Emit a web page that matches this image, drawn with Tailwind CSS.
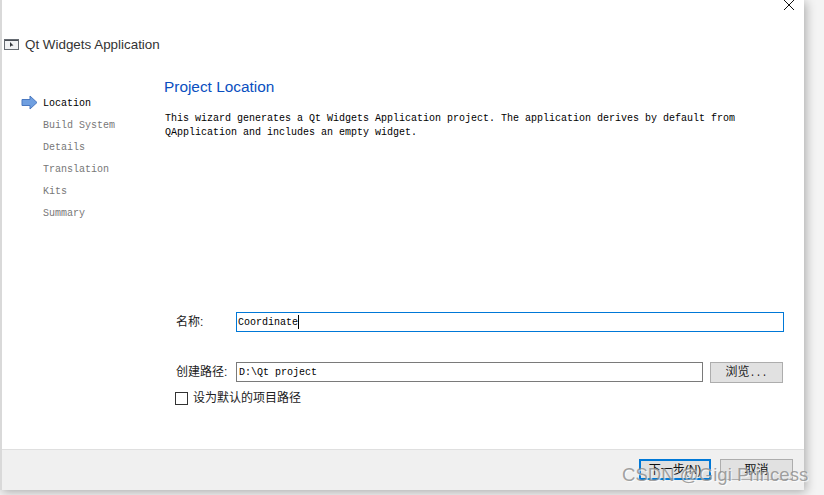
<!DOCTYPE html>
<html lang="zh">

<head>
  <meta charset="UTF-8">
  <title>Qt Widgets Application</title>
  <script src="https://cdn.jsdelivr.net/npm/@tailwindcss/browser@4"></script>
</head>

<body class="bg-white overflow-hidden">

  <div class="relative w-[824px] h-[495px] overflow-hidden bg-[#f4f4f4] font-['Liberation_Sans','Noto_Sans_CJK_SC',sans-serif]">

    <!-- Dialog -->
    <div class="relative w-[804px] h-[490px] flex flex-col bg-white border-l-2 border-[#d9d9d9] shadow-[2px_2px_10px_rgba(0,0,0,0.3)]">

      <svg class="absolute left-[781px] top-[-1px] w-3 h-3" viewBox="0 0 12 12" fill="none" stroke="#111" stroke-width="1">
        <path d="M1 1 11 11M11 1 1 11" />
      </svg>

      <!-- Title -->
      <div class="h-[90px] pt-[36px] pl-[2px] flex items-start gap-[6px]">
        <svg class="w-[15px] h-[13px] mt-[2px]" viewBox="0 0 15 13" fill="none">
          <rect x="0.5" y="1.5" width="14" height="10" fill="#f1f2f4" stroke="#666b72" />
          <rect x="1" y="2" width="13" height="1" fill="#4a4f57" />
          <path d="M6 4 6 9 7.3 7.8 9.5 7.6Z" fill="#33373d" />
        </svg>
        <span class="text-[13.4px] leading-[17px] text-[#333]">Qt Widgets Application</span>
      </div>

      <div class="flex-1 flex min-h-0">

        <!-- Steps -->
        <ul class="w-[162px] pt-[3px] font-['Liberation_Mono',monospace] text-[10px] leading-[22px] text-[#777]">
          <li class="relative pl-[41px] text-black">
            <svg class="absolute left-[19px] top-[2px] w-[17px] h-[15px]" viewBox="0 0 17 15">
              <path d="M1 4.5H9V1L16 7.5 9 14V10.5H1Z" fill="#6f9fe0" stroke="#4a78c0" stroke-width="1" />
            </svg>
            Location
          </li>
          <li class="pl-[41px]">Build System</li>
          <li class="pl-[41px]">Details</li>
          <li class="pl-[41px]">Translation</li>
          <li class="pl-[41px]">Kits</li>
          <li class="pl-[41px]">Summary</li>
        </ul>

        <!-- Page -->
        <div class="flex-1 flex flex-col min-w-0">
          <h1 class="text-[15.4px] leading-[20px] text-[#0a4fc0] mt-[-13px]">Project Location</h1>
          <p class="mt-[15px] pl-[1px] font-['Liberation_Mono',monospace] text-[10px] leading-[14px] text-black whitespace-pre">This wizard generates a Qt Widgets Application project. The application derives by default from
QApplication and includes an empty widget.</p>

          <div class="mt-[172px] pl-[12px] flex items-center h-[20px]">
            <label class="w-[60px] text-[12px] text-[#222]">名称:</label>
            <div class="w-[548px] h-[20px] border border-[#0078d7] flex items-center pl-[1px] font-['Liberation_Mono',monospace] text-[10px] text-black">
              Coordinate<span class="w-px h-[14px] bg-black"></span>
            </div>
          </div>

          <div class="mt-[30px] pl-[12px] flex items-center h-[20px]">
            <label class="w-[60px] text-[12px] text-[#222]">创建路径:</label>
            <div class="w-[467px] h-[20px] border border-[#7a7a7a] flex items-center pl-[2px] pt-px font-['Liberation_Mono',monospace] text-[10px] text-black">D:\Qt project</div>
            <button class="ml-[7px] w-[73px] h-[21px] bg-[#e1e1e1] border border-[#adadad] text-[12px] text-[#222]">浏览<span class="font-['Liberation_Mono',monospace] text-[10px]">...</span></button>
          </div>

          <div class="mt-[8px] pl-[11px] flex items-center gap-[5px] h-[16px]">
            <span class="w-[13px] h-[13px] border border-[#333] bg-white"></span>
            <span class="text-[12px] text-[#222]">设为默认的项目路径</span>
          </div>
        </div>
      </div>

      <!-- Footer -->
      <div class="h-[41px] bg-[#f0f0f0] border-t border-[#dfdfdf] flex justify-end gap-[9px] pt-[9px] pr-[11px]">
        <button class="w-[72px] h-[21px] bg-[#e1e1e1] border-2 border-[#0078d7] text-[12px] leading-none text-[#111]">下一步(N)</button>
        <button class="w-[73px] h-[21px] bg-[#e1e1e1] border border-[#adadad] text-[12px] leading-none text-[#111]">取消</button>
      </div>
    </div>

    <!-- Watermark -->
    <span class="absolute left-[622px] top-[463px] text-[18.6px] leading-[24px] text-[#8a8a8a]/80 [text-shadow:1px_1px_1px_rgba(255,255,255,0.8)]">CSDN @Gigi Princess</span>
  </div>

</body>

</html>
